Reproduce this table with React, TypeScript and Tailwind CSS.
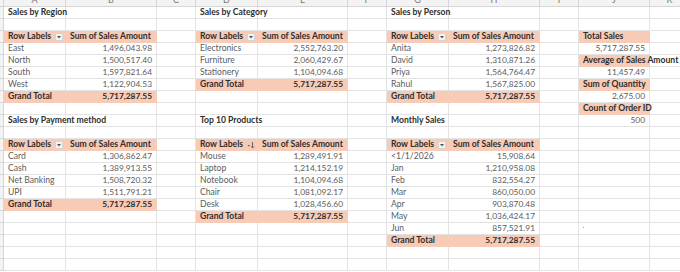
import React from "react";

type Cell = {
  t: string;
  bold?: boolean;
  pink?: boolean;
  right?: boolean;
  dd?: "dd" | "sort";
  overflow?: boolean;
};

const COLS = ["", "A", "B", "C", "D", "E", "F", "G", "H", "I", "J", "K"];
const NROWS = 22;

const cells: Record<string, Cell> = {};
const put = (r: number, c: number, cell: Cell) => {
  cells[`${r},${c}`] = cell;
};

function pivot(
  r0: number,
  c0: number,
  title: string,
  rows: [string, string][],
  total: string,
  icon: "dd" | "sort" = "dd"
) {
  put(r0, c0, { t: title, bold: true, overflow: true });
  put(r0 + 2, c0, { t: "Row Labels", bold: true, pink: true, dd: icon });
  put(r0 + 2, c0 + 1, { t: "Sum of Sales Amount", bold: true, pink: true });
  rows.forEach(([a, b], i) => {
    put(r0 + 3 + i, c0, { t: a, overflow: true });
    put(r0 + 3 + i, c0 + 1, { t: b, right: true });
  });
  const gr = r0 + 3 + rows.length;
  put(gr, c0, { t: "Grand Total", bold: true, pink: true });
  put(gr, c0 + 1, { t: total, bold: true, pink: true, right: true });
}

pivot(1, 1, "Sales by Region", [
  ["East", "1,496,043.98"],
  ["North", "1,500,517.40"],
  ["South", "1,597,821.64"],
  ["West", "1,122,904.53"],
], "5,717,287.55");
pivot(1, 4, "Sales by Category", [
  ["Electronics", "2,552,763.20"],
  ["Furniture", "2,060,429.67"],
  ["Stationery", "1,104,094.68"],
], "5,717,287.55");
pivot(1, 7, "Sales by Person", [
  ["Anita", "1,273,826.82"],
  ["David", "1,310,871.26"],
  ["Priya", "1,564,764.47"],
  ["Rahul", "1,567,825.00"],
], "5,717,287.55");
pivot(10, 1, "Sales by Payment method", [
  ["Card", "1,306,862.47"],
  ["Cash", "1,389,913.55"],
  ["Net Banking", "1,508,720.32"],
  ["UPI", "1,511,791.21"],
], "5,717,287.55");
pivot(10, 4, "Top 10 Products", [
  ["Mouse", "1,289,491.91"],
  ["Laptop", "1,214,152.19"],
  ["Notebook", "1,104,094.68"],
  ["Chair", "1,081,092.17"],
  ["Desk", "1,028,456.60"],
], "5,717,287.55", "sort");
pivot(10, 7, "Monthly Sales", [
  ["<1/1/2026", "15,908.64"],
  ["Jan", "1,210,958.08"],
  ["Feb", "832,554.27"],
  ["Mar", "860,050.00"],
  ["Apr", "903,870.48"],
  ["May", "1,036,424.17"],
  ["Jun", "857,521.91"],
], "5,717,287.55");

put(3, 10, { t: "Total Sales", bold: true, pink: true });
put(4, 10, { t: "5,717,287.55", right: true });
put(5, 10, { t: "Average of Sales Amount", bold: true, pink: true, overflow: true });
put(6, 10, { t: "11,457.49", right: true });
put(7, 10, { t: "Sum of Quantity", bold: true, pink: true });
put(8, 10, { t: "2,675.00", right: true });
put(9, 10, { t: "Count of Order ID", bold: true, pink: true, overflow: true });
put(10, 10, { t: "500", right: true });

function DropDown({ kind }: { kind: "dd" | "sort" }) {
  if (kind === "sort") {
    return (
      <span className="absolute right-[2px] top-[2px] w-[8px] h-[8px]">
        <svg width="8" height="8" viewBox="0 0 8 8">
          <path d="M0.5 4 L3 4 L1.75 5.4 Z" fill="#555" />
          <path d="M5.5 1 L5.5 7" stroke="#555" strokeWidth="0.9" />
          <path d="M4.2 5.5 L5.5 7 L6.8 5.5" stroke="#555" strokeWidth="0.9" fill="none" />
        </svg>
      </span>
    );
  }
  return (
    <span className="absolute right-[2px] top-[2px] w-[8px] h-[8px] bg-[#f4f4f4] border border-[#d4d4d4] flex items-center justify-center">
      <svg width="4" height="3" viewBox="0 0 4 3">
        <path d="M0 0 L4 0 L2 2.5 Z" fill="#555" />
      </svg>
    </span>
  );
}

export default function App() {
  const rows: React.ReactNode[] = [];
  COLS.forEach((c, ci) => {
    rows.push(
      <div
        key={`h${ci}`}
        className="bg-[#f3f3f3] border-r border-b border-[#d6d6d6] overflow-hidden flex items-start justify-center"
      >
        <span className="-mt-[5px] text-[9px] leading-[9px] text-[#7a7a7a]">{c}</span>
      </div>
    );
  });
  for (let r = 1; r <= NROWS; r++) {
    COLS.forEach((_, ci) => {
      if (ci === 0) {
        rows.push(
          <div key={`${r},0`} className="bg-[#f3f3f3] border-r border-b border-[#d6d6d6]" />
        );
        return;
      }
      const cell = cells[`${r},${ci}`];
      const pink = cell?.pink;
      const numeric = cell?.right;
      rows.push(
        <div
          key={`${r},${ci}`}
          className={
            "relative flex items-center border-b border-r " +
            (pink ? "bg-[#f8cbb6] border-[#f8cbb6] " : "border-[#e3e3e3] ") +
            (numeric ? "justify-end pr-[4px] " : "pl-[4px] ") +
            (cell?.overflow ? "overflow-visible z-10 " : "overflow-hidden ")
          }
        >
          {cell && (
            <span
              className={
                "whitespace-nowrap leading-none " +
                (numeric ? "text-[8.4px] " : "text-[8.6px] ") +
                (cell.bold ? "font-bold text-[#2e2e2e]" : "text-[#5c5c5c]")
              }
            >
              {cell.t}
            </span>
          )}
          {cell?.dd && <DropDown kind={cell.dd} />}
          {r === 19 && ci === 10 && (
            <span className="absolute left-[4px] top-[4px] w-[1px] h-[1px] bg-[#999]" />
          )}
        </div>
      );
    });
  }
  return (
    <div
      className="w-[680px] h-[272px] overflow-hidden bg-white"
      style={{ fontFamily: "Lato, 'Open Sans', sans-serif" }}
    >
      <div className="grid grid-cols-[4px_62px_91px_39px_62px_90px_39px_62px_91px_39px_71px_40px] grid-rows-[7px_repeat(22,12px)]">
        {rows}
      </div>
    </div>
  );
}
